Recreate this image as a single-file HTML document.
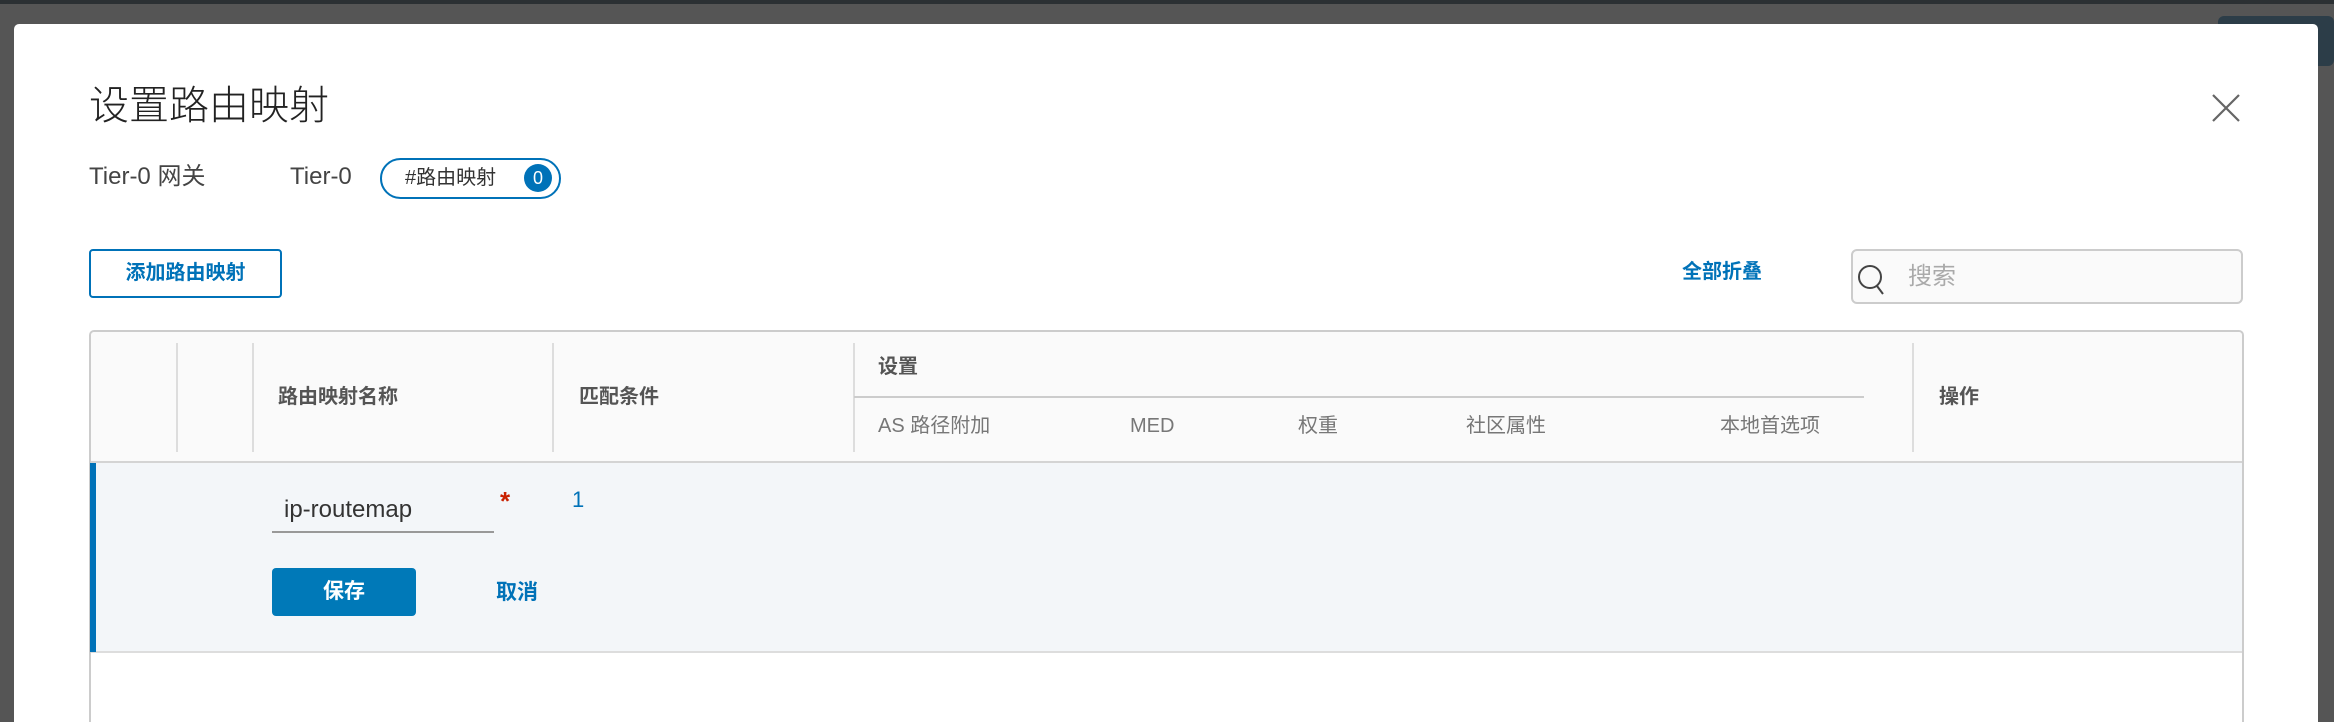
<!DOCTYPE html>
<html style="width:2334px;height:722px;overflow:hidden"><head><meta charset="utf-8"><style>
*{margin:0;padding:0;box-sizing:border-box}
body{width:2334px;height:722px;overflow:hidden;background:#555;font-family:"Liberation Sans","Noto Sans CJK SC",sans-serif;position:relative}
.a{position:absolute;white-space:nowrap}
.topbar{left:0;top:0;width:2334px;height:4px;background:#2b3033}
.modal{left:14px;top:24px;width:2304px;height:698px;background:#fff;border-radius:5px 5px 0 0}
.sep{position:absolute;width:2px;background:#ddd;top:343px;height:109px}
.hd{font-size:20px;font-weight:bold;color:#555;line-height:26px}
.sh{font-size:20px;color:#777;line-height:26px}
</style></head><body>
<div class="a topbar"></div>
<div class="a" style="left:2218px;top:16px;width:116px;height:50px;background:#2c3d48;border-radius:6px"></div>
<div class="a modal"></div>
<div class="a" style="left:89px;top:82px;font-size:40px;line-height:48px;color:#222;font-weight:300">设置路由映射</div>
<div class="a" style="left:89px;top:162px;font-size:24px;line-height:30px;color:#444">Tier-0 网关</div>
<div class="a" style="left:290px;top:162px;font-size:24px;line-height:30px;color:#444">Tier-0</div>
<div class="a" style="left:380px;top:158px;width:181px;height:41px;border:2px solid #0072b8;border-radius:21px"></div>
<div class="a" style="left:405px;top:165px;font-size:20px;line-height:26px;color:#333">#路由映射</div>
<div class="a" style="left:524px;top:164px;width:28px;height:28px;border-radius:50%;background:#0072b8;color:#fff;font-size:18px;text-align:center;line-height:28px">0</div>
<svg class="a" style="left:2211px;top:93px" width="30" height="30" viewBox="0 0 30 30"><path d="M2 2L28 28M28 2L2 28" stroke="#666" stroke-width="2.2" fill="none"/></svg>
<div class="a" style="left:89px;top:249px;width:193px;height:49px;border:2px solid #0072b8;border-radius:4px;color:#0072b8;font-size:20px;font-weight:bold;text-align:center;line-height:45px">添加路由映射</div>
<div class="a" style="left:1682px;top:259px;font-size:20px;line-height:26px;font-weight:bold;color:#0072b8">全部折叠</div>
<div class="a" style="left:1851px;top:249px;width:392px;height:55px;border:2px solid #ccc;border-radius:6px;background:#fafafa"></div>
<svg class="a" style="left:1856px;top:262px" width="32" height="34" viewBox="0 0 32 34"><circle cx="14" cy="15" r="11" stroke="#444" stroke-width="2" fill="none"/><path d="M21 24L27 32" stroke="#444" stroke-width="2"/></svg>
<div class="a" style="left:1908px;top:262px;font-size:24px;line-height:30px;color:#aaa">搜索</div>
<div class="a" style="left:89px;top:330px;width:2155px;height:392px;border:2px solid #ccc;border-bottom:none;border-radius:5px 5px 0 0;background:#fff"></div>
<div class="a" style="left:91px;top:332px;width:2151px;height:131px;background:#fafafa;border-bottom:2px solid #d4d4d4;border-radius:4px 4px 0 0"></div>
<div class="sep" style="left:176px"></div>
<div class="sep" style="left:252px"></div>
<div class="sep" style="left:552px"></div>
<div class="sep" style="left:853px"></div>
<div class="sep" style="left:1912px"></div>
<div class="a" style="left:854px;top:396px;width:1010px;height:2px;background:#ccc"></div>
<div class="a hd" style="left:278px;top:384px">路由映射名称</div>
<div class="a hd" style="left:579px;top:384px">匹配条件</div>
<div class="a hd" style="left:878px;top:354px">设置</div>
<div class="a hd" style="left:1939px;top:384px">操作</div>
<div class="a sh" style="left:878px;top:413px">AS 路径附加</div>
<div class="a sh" style="left:1130px;top:413px">MED</div>
<div class="a sh" style="left:1298px;top:413px">权重</div>
<div class="a sh" style="left:1466px;top:413px">社区属性</div>
<div class="a sh" style="left:1720px;top:413px">本地首选项</div>
<div class="a" style="left:91px;top:463px;width:2151px;height:190px;background:#f3f6f9;border-bottom:2px solid #ddd"></div>
<div class="a" style="left:90px;top:463px;width:6px;height:189px;background:#0072b8"></div>
<div class="a" style="left:284px;top:495px;font-size:24px;line-height:30px;color:#333">ip-routemap</div>
<div class="a" style="left:272px;top:531px;width:222px;height:2px;background:#999"></div>
<div class="a" style="left:500px;top:486px;font-size:26px;line-height:30px;color:#c92100;font-weight:bold">*</div>
<div class="a" style="left:572px;top:486px;font-size:22px;line-height:28px;color:#0072b8">1</div>
<div class="a" style="left:272px;top:568px;width:144px;height:48px;background:#0079b8;border-radius:4px;color:#fff;font-size:21px;font-weight:bold;text-align:center;line-height:48px">保存</div>
<div class="a" style="left:496px;top:579px;font-size:21px;line-height:27px;font-weight:bold;color:#0072b8">取消</div>
</body></html>
